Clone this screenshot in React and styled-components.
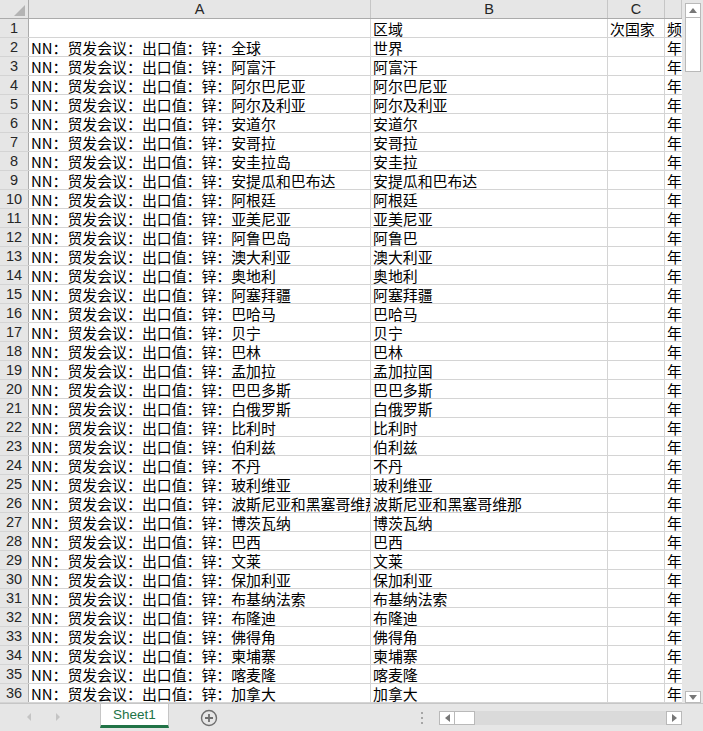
import React from "react";
import styled, { createGlobalStyle } from "styled-components";

const GlobalStyle = createGlobalStyle`
  html, body {
    margin: 0;
    padding: 0;
    overflow: hidden;
    background: #ffffff;
  }
`;

const countries = [
  ["全球", "世界"],
  ["阿富汗", "阿富汗"],
  ["阿尔巴尼亚", "阿尔巴尼亚"],
  ["阿尔及利亚", "阿尔及利亚"],
  ["安道尔", "安道尔"],
  ["安哥拉", "安哥拉"],
  ["安圭拉岛", "安圭拉"],
  ["安提瓜和巴布达", "安提瓜和巴布达"],
  ["阿根廷", "阿根廷"],
  ["亚美尼亚", "亚美尼亚"],
  ["阿鲁巴岛", "阿鲁巴"],
  ["澳大利亚", "澳大利亚"],
  ["奥地利", "奥地利"],
  ["阿塞拜疆", "阿塞拜疆"],
  ["巴哈马", "巴哈马"],
  ["贝宁", "贝宁"],
  ["巴林", "巴林"],
  ["孟加拉", "孟加拉国"],
  ["巴巴多斯", "巴巴多斯"],
  ["白俄罗斯", "白俄罗斯"],
  ["比利时", "比利时"],
  ["伯利兹", "伯利兹"],
  ["不丹", "不丹"],
  ["玻利维亚", "玻利维亚"],
  ["波斯尼亚和黑塞哥维那", "波斯尼亚和黑塞哥维那"],
  ["博茨瓦纳", "博茨瓦纳"],
  ["巴西", "巴西"],
  ["文莱", "文莱"],
  ["保加利亚", "保加利亚"],
  ["布基纳法索", "布基纳法索"],
  ["布隆迪", "布隆迪"],
  ["佛得角", "佛得角"],
  ["柬埔寨", "柬埔寨"],
  ["喀麦隆", "喀麦隆"],
  ["加拿大", "加拿大"],
];

const COLS = "29px 342px 237px 57px 1fr";

function App() {
  return (
    <Page>
      <GlobalStyle />
      <Main>
        <Grid>
          <HeaderRow>
            <Corner>
              <CornerMark />
            </Corner>
            <ColHead>A</ColHead>
            <ColHead>B</ColHead>
            <ColHead>C</ColHead>
            <ColHead />
          </HeaderRow>
          <Row>
            <RowHead>1</RowHead>
            <Cell />
            <Cell>区域</Cell>
            <Cell>次国家</Cell>
            <Cell>频</Cell>
          </Row>
          {countries.map(([a, b], i) => (
            <Row key={i}>
              <RowHead>{i + 2}</RowHead>
              <Cell>{"NN：贸发会议：出口值：锌：" + a}</Cell>
              <Cell>{b}</Cell>
              <Cell />
              <Cell>年</Cell>
            </Row>
          ))}
        </Grid>
        <VScroll>
          <VButton>
            <Arrow viewBox="0 0 8 5" $w={8} $h={5}>
              <path d="M0 5 L4 0 L8 5 Z" fill="#777" />
            </Arrow>
          </VButton>
          <VThumb />
          <Spacer />
          <VButton $bottom>
            <Arrow viewBox="0 0 8 5" $w={8} $h={5}>
              <path d="M0 0 L8 0 L4 5 Z" fill="#777" />
            </Arrow>
          </VButton>
        </VScroll>
      </Main>
      <TabBar>
        <NavArrows>
          <Arrow viewBox="0 0 4 8" $w={4} $h={8}>
            <path d="M4 0 L0 4 L4 8 Z" fill="#c4c4c4" />
          </Arrow>
          <Arrow viewBox="0 0 4 8" $w={4} $h={8}>
            <path d="M0 0 L4 4 L0 8 Z" fill="#c4c4c4" />
          </Arrow>
        </NavArrows>
        <SheetTab>Sheet1</SheetTab>
        <AddSheet>
          <svg width="18" height="18" viewBox="0 0 18 18">
            <circle cx="9" cy="9" r="7.5" fill="none" stroke="#6e6e6e" strokeWidth="1.4" />
            <path d="M9 5 V13 M5 9 H13" stroke="#6e6e6e" strokeWidth="1.8" />
          </svg>
        </AddSheet>
        <Spacer />
        <Dots>
          <Dot />
          <Dot />
          <Dot />
        </Dots>
        <HScroll>
          <HButton>
            <Arrow viewBox="0 0 5 8" $w={5} $h={8}>
              <path d="M5 0 L0 4 L5 8 Z" fill="#777" />
            </Arrow>
          </HButton>
          <HThumb />
          <Spacer />
          <HButton>
            <Arrow viewBox="0 0 5 8" $w={5} $h={8}>
              <path d="M0 0 L5 4 L0 8 Z" fill="#777" />
            </Arrow>
          </HButton>
        </HScroll>
        <TabBarEnd />
      </TabBar>
    </Page>
  );
}

export default App;

const Page = styled.div`
  width: 703px;
  height: 731px;
  display: flex;
  flex-direction: column;
  overflow: hidden;
  font-family: "Noto Sans CJK SC", "Liberation Sans", sans-serif;
`;

const Main = styled.div`
  display: flex;
  height: 703px;
`;

const Grid = styled.div`
  width: 682px;
  overflow: hidden;
  display: flex;
  flex-direction: column;
`;

const HeaderRow = styled.div`
  display: grid;
  grid-template-columns: ${COLS};
  height: 19px;
  flex-shrink: 0;
  background: #e6e6e6;
  border-bottom: 1px solid #ababab;
  box-sizing: border-box;
`;

const Corner = styled.div`
  position: relative;
  border-right: 1px solid #ababab;
`;

const CornerMark = styled.div`
  position: absolute;
  right: 3px;
  bottom: 2px;
  width: 0;
  height: 0;
  border-left: 11px solid transparent;
  border-bottom: 11px solid #b4b4b4;
`;

const ColHead = styled.div`
  border-right: 1px solid #c6c6c6;
  display: flex;
  align-items: center;
  justify-content: center;
  font-family: "Liberation Sans", sans-serif;
  font-size: 14.5px;
  color: #262626;
  white-space: nowrap;
  overflow: hidden;
`;

const Row = styled.div`
  display: grid;
  grid-template-columns: ${COLS};
  height: 19px;
  flex-shrink: 0;
  box-sizing: border-box;
  border-bottom: 1px solid #d4d4d4;
`;

const RowHead = styled.div`
  background: #e6e6e6;
  border-right: 1px solid #ababab;
  display: flex;
  align-items: center;
  justify-content: center;
  font-family: "Liberation Sans", sans-serif;
  font-size: 14.5px;
  color: #262626;
`;

const Cell = styled.div`
  border-right: 1px solid #d4d4d4;
  padding-left: 2px;
  padding-top: 1px;
  display: flex;
  align-items: center;
  font-size: 14.9px;
  line-height: 17px;
  color: #000;
  white-space: nowrap;
  overflow-x: clip;
  overflow-y: visible;
  box-sizing: border-box;
`;

const VScroll = styled.div`
  width: 21px;
  background: #e6e6e6;
  display: flex;
  flex-direction: column;
  align-items: center;
  padding-top: 3px;
  box-sizing: border-box;
`;

const VButton = styled.div`
  width: 16px;
  height: ${(p) => (p.$bottom ? "12px" : "15px")};
  background: #ffffff;
  border: 1px solid #b9b9b9;
  box-sizing: border-box;
  display: flex;
  align-items: center;
  justify-content: center;
`;

const VThumb = styled.div`
  width: 16px;
  height: 55px;
  margin-top: -1px;
  background: #ffffff;
  border: 1px solid #b9b9b9;
  box-sizing: border-box;
`;

const Spacer = styled.div`
  flex: 1;
`;

const Arrow = styled.svg`
  width: ${(p) => p.$w}px;
  height: ${(p) => p.$h}px;
  display: block;
`;

const TabBar = styled.div`
  height: 28px;
  background: #e6e6e6;
  border-top: 1px solid #c6c6c6;
  box-sizing: border-box;
  display: flex;
  align-items: flex-start;
`;

const NavArrows = styled.div`
  display: flex;
  align-items: center;
  gap: 25px;
  padding-left: 27px;
  width: 100px;
  height: 25px;
  box-sizing: border-box;
`;

const SheetTab = styled.div`
  width: 69px;
  height: 24px;
  background: #ffffff;
  border-left: 1px solid #c6c6c6;
  border-right: 1px solid #c6c6c6;
  border-bottom: 3px solid #217346;
  box-sizing: border-box;
  display: flex;
  align-items: center;
  justify-content: center;
  font-family: "Liberation Sans", sans-serif;
  font-size: 13.5px;
  color: #217346;
  padding-bottom: 1px;
`;

const AddSheet = styled.div`
  margin-left: 31px;
  margin-top: 4px;
  width: 18px;
  height: 18px;
`;

const Dots = styled.div`
  width: 4px;
  display: flex;
  flex-direction: column;
  gap: 3px;
  margin-top: 8px;
  margin-right: 14px;
`;

const Dot = styled.div`
  width: 2px;
  height: 2px;
  background: #a6a6a6;
`;

const HScroll = styled.div`
  width: 243px;
  height: 14px;
  margin-top: 7px;
  background: #dadada;
  display: flex;
`;

const HButton = styled.div`
  width: 16px;
  height: 14px;
  background: #ffffff;
  border: 1px solid #b9b9b9;
  box-sizing: border-box;
  display: flex;
  align-items: center;
  justify-content: center;
`;

const HThumb = styled.div`
  width: 21px;
  height: 14px;
  margin-left: -1px;
  background: #ffffff;
  border: 1px solid #b9b9b9;
  box-sizing: border-box;
`;

const TabBarEnd = styled.div`
  width: 21px;
`;
